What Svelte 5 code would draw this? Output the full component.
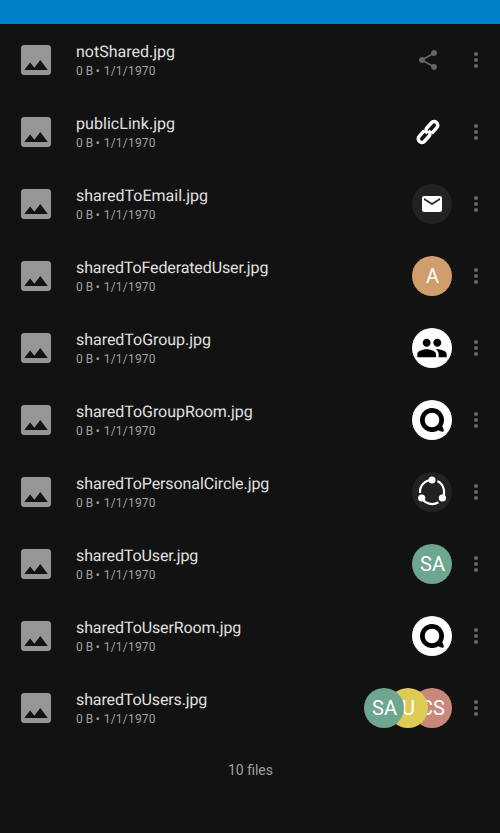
<script>
  const files = [
    { name: 'notShared.jpg', share: 'none', tracking: 0 },
    { name: 'publicLink.jpg', share: 'link', tracking: 0.05 },
    { name: 'sharedToEmail.jpg', share: 'email', tracking: 0 },
    { name: 'sharedToFederatedUser.jpg', tracking: -0.12, users: [{ initials: 'A', tone: 'orange' }] },
    { name: 'sharedToGroup.jpg', share: 'group', tracking: -0.04 },
    { name: 'sharedToGroupRoom.jpg', share: 'room', tracking: -0.05 },
    { name: 'sharedToPersonalCircle.jpg', share: 'circle', tracking: -0.09 },
    { name: 'sharedToUser.jpg', tracking: -0.12, users: [{ initials: 'SA', tone: 'green' }] },
    { name: 'sharedToUserRoom.jpg', share: 'room', tracking: -0.1 },
    {
      name: 'sharedToUsers.jpg',
      tracking: -0.12,
      users: [
        { initials: 'SA', tone: 'green' },
        { initials: 'U', tone: 'yellow' },
        { initials: 'CS', tone: 'red' }
      ]
    }
  ];
</script>

<div class="screen">
  <header class="status"></header>
  <main>
    {#each files as file}
      <div class="row">
        <svg class="thumb" width="40" height="40" viewBox="0 0 40 40">
          <path fill="#969696" fill-rule="evenodd" d="M8.300 5h23.400A3.300 3.300 0 0 1 35 8.300v23.400a3.300 3.300 0 0 1-3.300 3.300H8.300A3.300 3.300 0 0 1 5 31.700V8.300A3.300 3.300 0 0 1 8.300 5zM8.300 30h23.400L24.300 20l-5.900 7.700L14.100 22.500z" />
        </svg>
        <div class="info">
          <div class="name" style="letter-spacing: {file.tracking}px">{file.name}</div>
          <div class="meta"><span class="size">0 B</span><span class="dot">•</span><span class="date">1/1/1970</span></div>
        </div>
        {#if file.users}
          <div class="avatars">
            {#each file.users as user, i}
              <span class="avatar {user.tone}" style="z-index: {3 - i}">{user.initials}</span>
            {/each}
          </div>
        {:else if file.share === 'none'}
          <svg class="plain" width="24" height="24" viewBox="0 0 24 24" fill="#666">
            <path d="M18 16.080c-.76 0-1.440.3-1.960.77L8.910 12.700c.05-.23.09-.46.09-.7s-.04-.47-.09-.7l7.050-4.110c.54.5 1.250.81 2.040.81 1.660 0 3-1.340 3-3s-1.340-3-3-3-3 1.340-3 3c0 .24.04.47.09.7L8.040 9.810C7.500 9.310 6.790 9 6 9c-1.660 0-3 1.340-3 3s1.340 3 3 3c.79 0 1.500-.31 2.040-.81l7.120 4.160c-.05.21-.08.43-.08.65 0 1.610 1.310 2.920 2.920 2.920s2.920-1.310 2.920-2.920-1.310-2.920-2.920-2.920z" />
          </svg>
        {:else if file.share === 'link'}
          <svg class="plain" width="24" height="24" viewBox="0 0 24 24" fill="none" stroke="#fff" stroke-width="3.500">
            <g transform="rotate(-48 12 12)">
              <path d="M10.600 8.400H2.800a3.600 3.600 0 0 0 0 7.200H9.800a3.600 3.600 0 0 0 3.400-4" />
              <path d="M13.400 15.600H21.200a3.600 3.600 0 0 0 0-7.200H14.200a3.600 3.600 0 0 0-3.400 4" />
            </g>
          </svg>
        {:else}
          <span class="badge" class:light={file.share === 'group' || file.share === 'room'}>
            {#if file.share === 'email'}
              <svg width="24" height="24" viewBox="0 0 24 24" fill="#fff">
                <path d="M20 4H4c-1.100 0-1.990.9-1.990 2L2 18c0 1.100.9 2 2 2h16c1.100 0 2-.9 2-2V6c0-1.100-.9-2-2-2zm0 4l-8 5-8-5V6l8 5 8-5v2z" />
              </svg>
            {:else if file.share === 'group'}
              <svg width="32" height="32" viewBox="0 0 24 24">
                <path d="M16 11c1.660 0 2.990-1.340 2.990-3S17.660 5 16 5c-1.660 0-3 1.340-3 3s1.340 3 3 3zm-8 0c1.660 0 2.990-1.340 2.990-3S9.660 5 8 5C6.340 5 5 6.340 5 8s1.340 3 3 3zm0 2c-2.330 0-7 1.170-7 3.500V19h14v-2.500c0-2.330-4.670-3.500-7-3.500zm8 0c-.29 0-.62.02-.97.05 1.160.84 1.970 1.970 1.970 3.450V19h6v-2.500c0-2.330-4.670-3.500-7-3.500z" />
              </svg>
            {:else if file.share === 'room'}
              <svg width="40" height="40" viewBox="0 0 40 40">
                <path fill-rule="evenodd" d="M20 8a12 12 0 1 0 6.300 22.200c1.500 1 4.400 1.900 5.200 1.300.8-.8-.4-3.900-1.300-5.200A12 12 0 0 0 20 8zm0 4.700a7.300 7.300 0 1 1 0 14.600 7.300 7.300 0 0 1 0-14.600z" />
              </svg>
            {:else}
              <svg width="40" height="40" viewBox="0 0 40 40" fill="#fff">
                <g fill="none" stroke="#fff" stroke-width="2.200">
                  <path d="M8 21A12 12 0 0 1 20 8" />
                  <path d="M25.400 9.100A12.100 12.100 0 0 1 30.400 26" />
                  <path d="M9.700 26A12 12 0 0 0 26.400 30.200" />
                </g>
                <circle cx="20" cy="8" r="3.500" />
                <circle cx="9.700" cy="26" r="3.600" />
                <circle cx="30.400" cy="26" r="3.600" />
              </svg>
            {/if}
          </span>
        {/if}
        <svg class="more" width="24" height="24" viewBox="0 0 24 24" fill="#666">
          <circle cx="12" cy="6" r="2" /><circle cx="12" cy="12" r="2" /><circle cx="12" cy="18" r="2" />
        </svg>
      </div>
    {/each}
  </main>
  <footer>10 files</footer>
</div>

<style>
  :global(body) {
    margin: 0;
    background: #121212;
  }
  .screen {
    height: 833px;
    overflow: hidden;
    background: #121212;
    font-family: Roboto, sans-serif;
  }
  .status {
    height: 24px;
    background: #0082c9;
  }
  .row {
    display: flex;
    align-items: center;
    box-sizing: border-box;
    height: 72px;
    padding: 0 12px 0 16px;
  }
  svg {
    display: block;
    flex: none;
    overflow: visible;
  }
  .info {
    flex: 1;
    margin-left: 20px;
    white-space: nowrap;
  }
  .name {
    padding-top: 1px;
    font-size: 16px;
    line-height: 20px;
    text-rendering: geometricPrecision;
    color: #e0e0e0;
  }
  .meta {
    display: flex;
    margin-top: 1px;
    font-size: 12px;
    line-height: 16px;
    color: #a0a0a0;
  }
  .dot {
    margin: 0 4px 0 2.500px;
  }
  .date {
    letter-spacing: 0.200px;
  }
  .plain {
    margin-right: 24px;
  }
  .badge,
  .avatar {
    display: flex;
    align-items: center;
    justify-content: center;
    box-sizing: border-box;
    width: 40px;
    height: 40px;
    border-radius: 50%;
    background: #222;
  }
  .badge {
    margin-right: 12px;
  }
  .badge.light {
    background: #fff;
  }
  .avatars {
    display: flex;
    margin-right: 12px;
  }
  .avatar {
    position: relative;
    padding-left: 1px;
    font-size: 20px;
    line-height: 40px;
    color: #fff;
  }
  .avatar + .avatar {
    margin-left: -16px;
  }
  .orange {
    background: #d09e6d;
  }
  .green {
    background: #6ea68f;
  }
  .yellow {
    background: #ddcb55;
  }
  .red {
    background: #c98879;
  }
  footer {
    padding: 16px 0 0 1px;
    font-size: 14px;
    line-height: 20px;
    text-align: center;
    color: #a0a0a0;
  }
</style>
